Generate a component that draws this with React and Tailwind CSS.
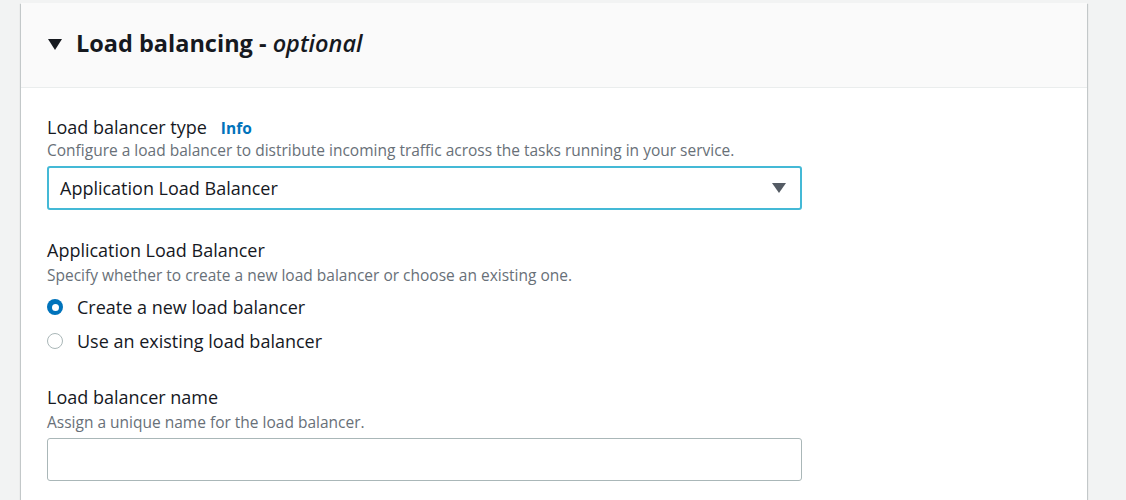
import React from "react";

const font = { fontFamily: '"Open Sans", "Liberation Sans", sans-serif' };

const Radio = ({ checked, label }) => (
  <label className="flex items-center h-[34px]">
    {checked ? (
      <span className="w-4 h-4 rounded-full bg-[#0073bb] flex items-center justify-center">
        <span className="w-[7px] h-[7px] rounded-full bg-white" />
      </span>
    ) : (
      <span className="w-4 h-4 rounded-full border-[1.5px] border-[#aab7b8] bg-white" />
    )}
    <span className="ml-[14px] text-[18px] text-[#16191f]">{label}</span>
  </label>
);

const App = () => {
  return (
    <div className="min-h-[500px] bg-[#f2f3f3] pt-[3px] pl-[21px] w-[1126px]" style={font}>
      <div className="w-[1066px] h-[497px] bg-white shadow-[0_1px_1px_0_rgba(0,28,36,0.3),1px_1px_1px_0_rgba(0,28,36,0.15),-1px_1px_1px_0_rgba(0,28,36,0.15)]">
        <div className="h-[85px] bg-[#fafafa] border-b border-[#eaeded] flex items-center pl-[27px] pb-[3px]">
          <svg width="14" height="11" viewBox="0 0 14 11" className="mt-[1px]">
            <path d="M0 0 L14 0 L7 11 Z" fill="#16191f" />
          </svg>
          <h2 className="ml-[14px] text-[23.5px] font-bold text-[#16191f]">
            Load balancing - <i className="font-semibold">optional</i>
          </h2>
        </div>

        <div className="pl-[26px] pt-[27px]">
          <div className="flex items-baseline h-[24px]">
            <span className="text-[18px] leading-[24px] text-[#16191f]">Load balancer type</span>
            <span className="ml-[14px] text-[15.5px] leading-[24px] font-bold text-[#0073bb]">Info</span>
          </div>
          <p className="text-[15.5px] text-[#687078] leading-[22px]">
            Configure a load balancer to distribute incoming traffic across the tasks running in your service.
          </p>
          <div className="mt-[5px] w-[755px] h-[44px] border-2 border-[#44b9d6] rounded-[3px] flex items-center justify-between pl-[11px] pr-[14px]">
            <span className="text-[18px] text-[#16191f]">Application Load Balancer</span>
            <svg width="14" height="10" viewBox="0 0 14 10">
              <path d="M0 0 L14 0 L7 10 Z" fill="#545b64" />
            </svg>
          </div>

          <div className="mt-[28px] text-[18px] leading-[24px] text-[#16191f]">Application Load Balancer</div>
          <p className="mt-[2px] text-[15.5px] text-[#687078] leading-[22px]">
            Specify whether to create a new load balancer or choose an existing one.
          </p>
          <div className="mt-[4px]">
            <Radio checked label="Create a new load balancer" />
            <Radio label="Use an existing load balancer" />
          </div>

          <div className="mt-[27px] text-[18px] leading-[24px] text-[#16191f]">Load balancer name</div>
          <p className="mt-[2px] text-[15.5px] text-[#687078] leading-[22px]">
            Assign a unique name for the load balancer.
          </p>
          <div className="mt-[5px] w-[755px] h-[43px] border border-[#aab7b8] rounded-[3px] bg-white" />
        </div>
      </div>
    </div>
  );
};

export default App;
